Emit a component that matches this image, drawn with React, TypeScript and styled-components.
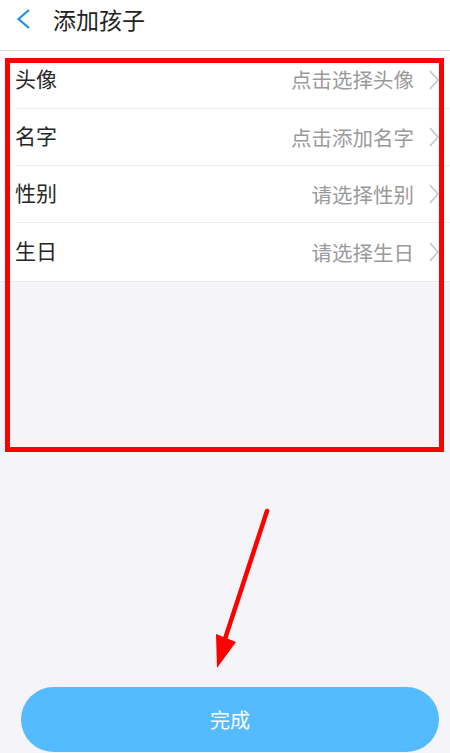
import React from "react";
import styled, { createGlobalStyle } from "styled-components";

const GlobalStyle = createGlobalStyle`
  html, body {
    margin: 0;
    padding: 0;
    background: #f5f5f9;
    font-family: "Noto Sans CJK SC", "Noto Sans", sans-serif;
  }
`;

// Whole screen
const Page = styled.div`
  position: relative;
  display: flex;
  flex-direction: column;
  height: 753px;
  overflow: hidden;
  background: #f5f5f9;
`;

// Top bar | back | title |
const Header = styled.div`
  display: flex;
  align-items: flex-start;
  height: 50px;
  background: #ffffff;
  border-bottom: 1px solid #dcdcdc;
  box-sizing: content-box;
`;

const BackButton = styled.div`
  display: flex;
  align-items: center;
  height: 38px;
  padding-left: 16px;
  width: 37px;
`;

const Title = styled.div`
  font-size: 23px;
  line-height: 38px;
  color: #222222;
`;

const List = styled.div`
  background: #ffffff;
  border-bottom: 1px solid #e8e8ec;
`;

// first and last rows are one pixel taller than the middle ones
const Row = styled.div<{ $tall?: boolean; $last?: boolean }>`
  display: flex;
  align-items: center;
  height: ${(p) => (p.$tall ? "58px" : "57px")};
  margin-left: 15px;
  padding-right: 11px;
  padding-bottom: 4px;
  box-sizing: border-box;
  border-bottom: ${(p) => (p.$last ? "none" : "1px solid #ececf0")};
`;

const Label = styled.div`
  flex: 1;
  font-size: 21px;
  color: #262626;
`;

const Value = styled.div`
  font-size: 20.5px;
  color: #9a9a9a;
  margin-right: 15px;
  padding-top: 3px;
`;

const Footer = styled.div`
  margin-top: auto;
  padding: 0 11px 1px 21px;
`;

const DoneButton = styled.div`
  display: flex;
  align-items: center;
  justify-content: center;
  height: 65px;
  border-radius: 33px;
  background: #55bbff;
  color: #ffffff;
  font-size: 20px;
`;

// Annotations drawn over the screenshot
const HighlightBox = styled.div`
  position: absolute;
  left: 5px;
  top: 58px;
  width: 439px;
  height: 394px;
  border: 5px solid #ff0000;
  box-sizing: border-box;
  pointer-events: none;
`;

const ArrowLayer = styled.svg`
  position: absolute;
  left: 0;
  top: 0;
  pointer-events: none;
`;

const Chevron = () => (
  <svg width="10" height="20" viewBox="0 0 10 20" style={{ marginTop: 4 }}>
    <polyline points="1,1 9,10 1,19" fill="none" stroke="#c4c4c4" strokeWidth="1.6" />
  </svg>
);

const rows = [
  { label: "头像", value: "点击选择头像" },
  { label: "名字", value: "点击添加名字" },
  { label: "性别", value: "请选择性别" },
  { label: "生日", value: "请选择生日" },
];

const App = () => {
  return (
    <Page>
      <GlobalStyle />
      <Header>
        <BackButton>
          <svg width="15" height="20" viewBox="0 0 15 20">
            <polyline points="13,1 2.5,10 13,19" fill="none" stroke="#1a8ff0" strokeWidth="2.2" />
          </svg>
        </BackButton>
        <Title>添加孩子</Title>
      </Header>

      <List>
        {rows.map((r, i) => (
          <Row key={r.label} $tall={i === 0 || i === rows.length - 1} $last={i === rows.length - 1}>
            <Label>{r.label}</Label>
            <Value>{r.value}</Value>
            <Chevron />
          </Row>
        ))}
      </List>

      <Footer>
        <DoneButton>完成</DoneButton>
      </Footer>

      <HighlightBox />
      <ArrowLayer width="450" height="753" viewBox="0 0 450 753">
        <line x1="267" y1="511" x2="224" y2="642" stroke="#ff0000" strokeWidth="4.5" strokeLinecap="round" />
        <polygon points="216,634 236,642 217,668" fill="#ff0000" />
      </ArrowLayer>
    </Page>
  );
};

export default App;
